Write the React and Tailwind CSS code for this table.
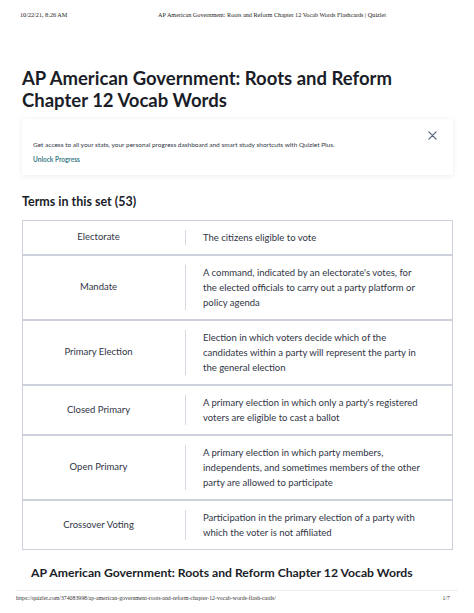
import React from "react";

const rows = [
  ["Electorate", ["The citizens eligible to vote"]],
  ["Mandate", ["A command, indicated by an electorate's votes, for", "the elected officials to carry out a party platform or", "policy agenda"]],
  ["Primary Election", ["Election in which voters decide which of the", "candidates within a party will represent the party in", "the general election"]],
  ["Closed Primary", ["A primary election in which only a party's registered", "voters are eligible to cast a ballot"]],
  ["Open Primary", ["A primary election in which party members,", "independents, and sometimes members of the other", "party are allowed to participate"]],
  ["Crossover Voting", ["Participation in the primary election of a party with", "which the voter is not affiliated"]],
];

export default function App() {
  return (
    <div className="w-[474px] h-[613px] bg-white relative overflow-hidden">
      <div className="flex items-center h-[30px] pl-[20px] pr-[20px] text-[6.2px] text-[#222] font-['Liberation_Serif',serif]">
        <span className="w-[138px]">10/22/21, 8:26 AM</span>
        <span>AP American Government: Roots and Reform Chapter 12 Vocab Words Flashcards | Quizlet</span>
      </div>
      <div className="px-[22px] font-['Lato',sans-serif] text-[#1a1d28]">
        <h1 className="mt-[37px] text-[18.5px] leading-[22px] font-bold">
          AP American Government: Roots and Reform<br />Chapter 12 Vocab Words
        </h1>
        <div className="mt-[8px] h-[56px] w-[431px] shadow-[0_1px_6px_rgba(0,0,0,0.08)] rounded-[2px] relative pl-[11px] pt-[21px]">
          <div className="text-[6.5px] text-[#333846]">Get access to all your stats, your personal progress dashboard and smart study shortcuts with Quizlet Plus.</div>
          <div className="mt-[5px] text-[6.5px] font-bold text-[#3d7e87]">Unlock Progress</div>
          <svg className="absolute right-[16px] top-[12px]" width="9" height="9" viewBox="0 0 10 10">
            <path d="M1 1L9 9M9 1L1 9" stroke="#586380" strokeWidth="1.4" strokeLinecap="round" />
          </svg>
        </div>
        <div className="mt-[19px] text-[12.5px] font-bold leading-[16px] text-[#1a1d28]">Terms in this set (53)</div>
        <div className="mt-[10px] w-[431px] border-[1.5px] border-[#cdd1dc]">
          {rows.map(([term, def], i) => (
            <div key={i} className={`flex items-stretch py-[9px] ${i > 0 ? "border-t-2 border-[#cdd1dc]" : ""}`}>
              <div className="w-[151px] flex items-center justify-center text-[9.5px] text-[#303545]">{term}</div>
              <div className="ml-[11px] w-px bg-[#d6d9e1]" />
              <div className="ml-[17px] text-[9.5px] leading-[15px] text-[#303545]">
                {def.map((l, j) => (
                  <div key={j}>{l}</div>
                ))}
              </div>
            </div>
          ))}
        </div>
        <div className="mt-[15px] pl-[9px] text-[12.2px] font-bold leading-[16px] text-[#1a1d28]">
          AP American Government: Roots and Reform Chapter 12 Vocab Words
        </div>
      </div>
      <div className="absolute left-[16px] right-[16px] top-[590px] border-t border-[#eee]" />
      <div className="absolute left-[16px] right-[24px] top-[594px] flex justify-between text-[5.8px] text-[#333] font-['Liberation_Serif',serif]">
        <span>https://quizlet.com/374083998/ap-american-government-roots-and-reform-chapter-12-vocab-words-flash-cards/</span>
        <span>1/7</span>
      </div>
    </div>
  );
}
